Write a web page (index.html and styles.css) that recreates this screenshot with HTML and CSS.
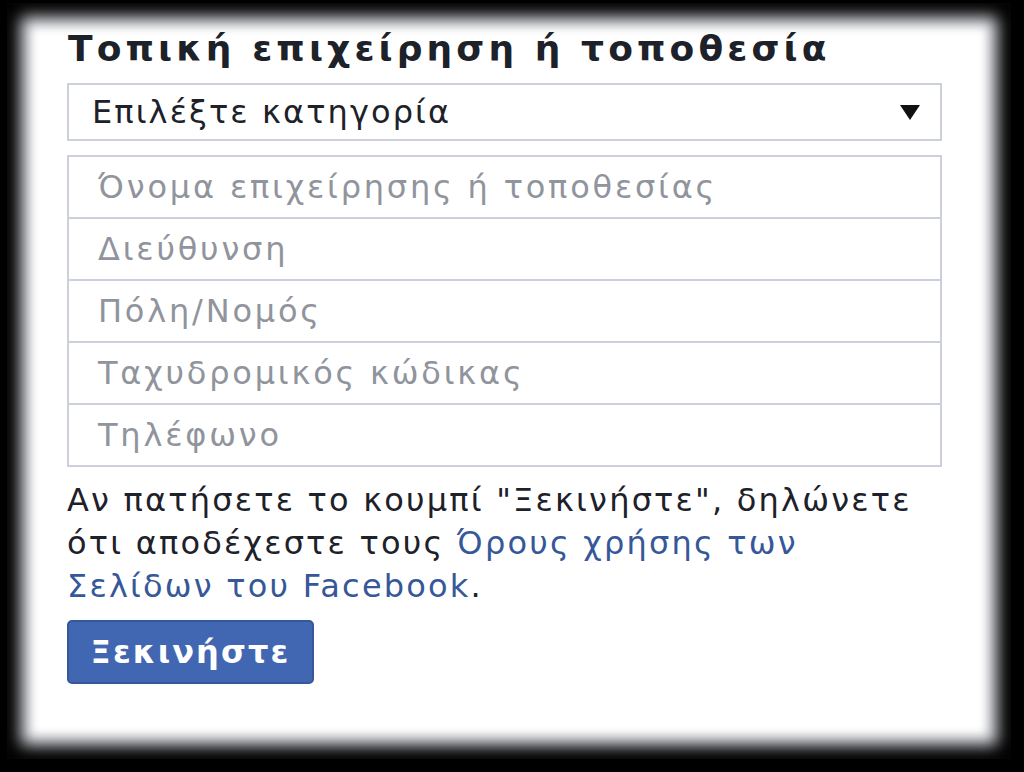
FILE: index.html
```html
<!DOCTYPE html>
<html lang="el">
<head>
<meta charset="utf-8">
<link rel="stylesheet" href="styles.css">
</head>
<body>
<div class="frame">
  <h1 class="title">Τοπική επιχείρηση ή τοποθεσία</h1>
  <div class="select">
    <span>Επιλέξτε κατηγορία</span>
    <span class="caret"></span>
  </div>
  <div class="fields">
    <div class="field">Όνομα επιχείρησης ή τοποθεσίας</div>
    <div class="field">Διεύθυνση</div>
    <div class="field">Πόλη/Νομός</div>
    <div class="field">Ταχυδρομικός κώδικας</div>
    <div class="field">Τηλέφωνο</div>
  </div>
  <p class="terms">Αν πατήσετε το κουμπί "Ξεκινήστε", δηλώνετε ότι αποδέχεστε τους <a href="#">Όρους χρήσης των Σελίδων του Facebook</a>.</p>
  <button class="start">Ξεκινήστε</button>
</div>
</body>
</html>
```

FILE: styles.css
```css
html, body {
  margin: 0;
  padding: 0;
  background: #000;
}
body {
  width: 1024px;
  height: 772px;
  overflow: hidden;
  font-family: "DejaVu Sans", Verdana, sans-serif;
}
.frame {
  margin: 3px 13px 13px 7px;
  height: 756px;
  box-sizing: border-box;
  background: #fff;
  box-shadow: inset 0 0 16px 14px #000, inset 0 0 8px 24px rgba(214, 217, 226, 0.6);
  padding: 24px 69px 0 60px;
}
.title {
  margin: 0 0 12px 1px;
  font-size: 36px;
  line-height: 44px;
  font-weight: bold;
  letter-spacing: 4.1px;
  color: #1d2129;
}
.select {
  display: flex;
  align-items: center;
  justify-content: space-between;
  height: 58px;
  box-sizing: border-box;
  border: 2px solid #ccd0da;
  padding: 0 20px 0 23px;
  font-size: 32px;
  letter-spacing: 2.1px;
  color: #1d2129;
}
.caret {
  width: 0;
  height: 0;
  border-left: 10px solid transparent;
  border-right: 10px solid transparent;
  border-top: 15px solid #111;
}
.fields {
  margin-top: 14px;
  border: 2px solid #ccd0da;
}
.field {
  height: 60px;
  display: flex;
  align-items: center;
  padding-left: 29px;
  font-size: 32px;
  letter-spacing: 2.8px;
  color: #90949c;
}
.field + .field {
  border-top: 2px solid #ccd0da;
}
.terms {
  margin: 12px 0 0 0;
  font-size: 32px;
  line-height: 43px;
  letter-spacing: 2.2px;
  color: #1d2129;
}
.terms a {
  color: #365899;
  text-decoration: none;
}
.start {
  margin-top: 12px;
  height: 64px;
  width: 247px;
  background: #4267b2;
  border: 2px solid #365899;
  border-radius: 5px;
  color: #fff;
  font-family: "DejaVu Sans", Verdana, sans-serif;
  font-weight: bold;
  font-size: 32px;
  letter-spacing: 2.1px;
  padding: 0;
}
```
